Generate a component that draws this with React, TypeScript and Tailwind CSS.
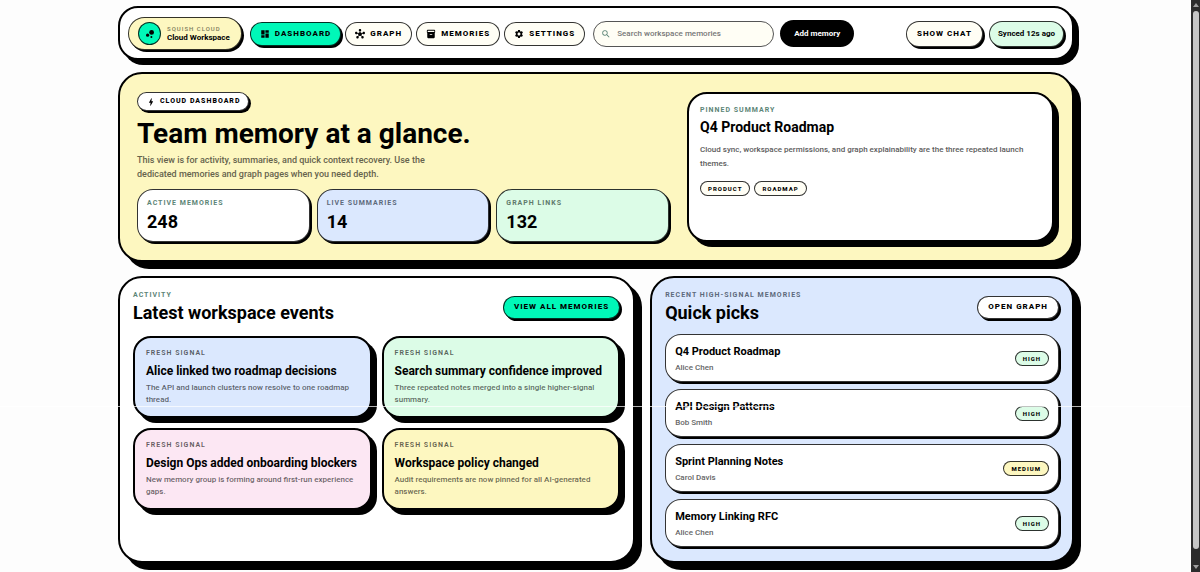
import type { ReactNode } from 'react';
import clsx from 'clsx';
import { MdBolt, MdBubbleChart, MdDashboard, MdHub, MdInventory2, MdSearch, MdSettings } from 'react-icons/md';

const navItems = [
  { label: 'Dashboard', icon: MdDashboard, active: true },
  { label: 'Graph', icon: MdHub, active: false },
  { label: 'Memories', icon: MdInventory2, active: false },
  { label: 'Settings', icon: MdSettings, active: false },
];

const stats = [
  { label: 'Active memories', value: '248', bg: 'bg-white', tone: 'text-[#5c8577]' },
  { label: 'Live summaries', value: '14', bg: 'bg-[#dbe8fe]', tone: 'text-[#5d6a7c]' },
  { label: 'Graph links', value: '132', bg: 'bg-[#dcfce7]', tone: 'text-[#5f7a6b]' },
];

const events = [
  { title: 'Alice linked two roadmap decisions', body: 'The API and launch clusters now resolve to one roadmap thread.', bg: 'bg-[#dbe8fe]' },
  { title: 'Search summary confidence improved', body: 'Three repeated notes merged into a single higher-signal summary.', bg: 'bg-[#dcfce7]' },
  { title: 'Design Ops added onboarding blockers', body: 'New memory group is forming around first-run experience gaps.', bg: 'bg-[#fce7f3]' },
  { title: 'Workspace policy changed', body: 'Audit requirements are now pinned for all AI-generated answers.', bg: 'bg-[#fdf7c0]' },
];

const picks = [
  { title: 'Q4 Product Roadmap', author: 'Alice Chen', level: 'High' },
  { title: 'API Design Patterns', author: 'Bob Smith', level: 'High' },
  { title: 'Sprint Planning Notes', author: 'Carol Davis', level: 'Medium' },
  { title: 'Memory Linking RFC', author: 'Alice Chen', level: 'High' },
];

function Eyebrow({ children, className }: { children: ReactNode; className?: string }) {
  return <p className={clsx('text-[7px] leading-2 font-bold tracking-[1px] uppercase', className)}>{children}</p>;
}

function Tag({ children, className }: { children: ReactNode; className?: string }) {
  return <span className={clsx('inline-flex h-[15px] items-center rounded-full border border-black/80 px-[7px] text-[6px] font-extrabold tracking-[1px] uppercase', className)}>{children}</span>;
}

function PillButton({ children, className }: { children: ReactNode; className?: string }) {
  return (
    <button className={clsx('shrink-0 rounded-full border border-black/80 px-[10px] text-[8px] font-extrabold tracking-[1px] whitespace-nowrap uppercase shadow-[2px_2px_0_#000]', className)}>
      {children}
    </button>
  );
}

function Scrollbar() {
  return (
    <div aria-hidden="true" className="fixed inset-y-0 right-0 flex w-[9px] flex-col items-center gap-1 bg-[#2c2c2c] py-[3px]">
      <span className="border-x-[3px] border-b-[4px] border-x-transparent border-b-[#9f9f9f]" />
      <span className="mb-3 w-[6px] flex-1 rounded-full bg-[#c6c6c6]" />
      <span className="border-x-[3px] border-t-[4px] border-x-transparent border-t-[#9f9f9f]" />
    </div>
  );
}

function Header() {
  return (
    <header className="flex items-center rounded-[20px] border-2 border-black bg-white px-2 pt-[9px] pb-2 shadow-[5px_5px_0_#000]">
      <a href="#" className="flex items-center gap-[6px] rounded-full border border-black/80 bg-[#fdf7c0] py-1 pr-[11px] pl-[9px] shadow-[2px_2px_0_#000]">
        <span className="flex size-[23px] items-center justify-center rounded-full border border-black/80 bg-[#00f8b8]"><MdBubbleChart className="size-3" /></span>
        <span className="whitespace-nowrap">
          <span className="block text-[6px] leading-2 font-medium tracking-[1px] text-[#7d7c5c] uppercase">Squish Cloud</span>
          <span className="block text-[8px] leading-[10px] font-bold">Cloud Workspace</span>
        </span>
      </a>
      <nav className="ml-2 flex gap-1">
        {navItems.map(({ label, icon: Icon, active }) => (
          <a key={label} href="#" className={clsx('flex h-6 items-center gap-[5px] rounded-full border border-black/80 px-[9px] text-[8px] font-extrabold tracking-[1px] uppercase', active ? 'bg-[#00f8b8] shadow-[2px_2px_0_#000]' : 'bg-[#fffef5]')}>
            <Icon className="size-[10px]" />{label}
          </a>
        ))}
      </nav>
      <label className="ml-2 flex h-[26px] w-[181px] items-center gap-[6px] rounded-full border border-[#555] bg-[#fffef5] px-[7px]">
        <MdSearch className="size-[10px] shrink-0 text-[#5c8577]" />
        <input type="search" aria-label="Search workspace memories" placeholder="Search workspace memories" className="w-full min-w-0 bg-transparent text-[8px] font-medium outline-none placeholder:text-[#777]" />
      </label>
      <button className="ml-[6px] h-[27px] rounded-full bg-black px-[14px] text-[8px] font-bold whitespace-nowrap text-white">Add memory</button>
      <div className="ml-auto flex gap-[6px]">
        <PillButton className="h-[26px] bg-[#fffef5]">Show chat</PillButton>
        <span className="flex h-[26px] items-center rounded-full border border-black/80 bg-[#dcfce7] px-2 text-[8px] font-bold whitespace-nowrap shadow-[2px_2px_0_#000]">Synced 12s ago</span>
      </div>
    </header>
  );
}

function Hero() {
  return (
    <section className="mt-3 grid grid-cols-[1.45fr_1fr] gap-[18px] rounded-[24px] border-2 border-black bg-[#fdf7c0] py-[18px] pr-[18px] pl-[17px] shadow-[7px_7px_0_#000]">
      <div>
        <span className="flex h-[19px] w-fit items-center gap-1 rounded-full border border-black/80 bg-white px-2 text-[7px] font-extrabold tracking-[1px] uppercase shadow-[2px_2px_0_#000]"><MdBolt className="size-[10px]" />Cloud dashboard</span>
        <h1 className="mt-[9px] text-[28px] leading-7 font-bold">Team memory at a glance.</h1>
        <p className="mt-[5px] max-w-[320px] text-[9px] leading-[14px] font-medium text-[#66634d]">This view is for activity, summaries, and quick context recovery. Use the dedicated memories and graph pages when you need depth.</p>
        <div className="mt-2 grid grid-cols-3 gap-[7px]">
          {stats.map(stat => (
            <div key={stat.label} className={clsx('rounded-[16px] border border-black/80 px-[9px] pt-[9px] pb-2 shadow-[2px_2px_0_#000]', stat.bg)}>
              <Eyebrow className={stat.tone}>{stat.label}</Eyebrow>
              <p className="mt-1 text-[18px] leading-[22px] font-bold">{stat.value}</p>
            </div>
          ))}
        </div>
      </div>
      <article className="rounded-[20px] border-2 border-black bg-white px-[11px] py-3 shadow-[5px_5px_0_#000]">
        <Eyebrow className="text-[#5c8577]">Pinned summary</Eyebrow>
        <h2 className="mt-[5px] text-[14px] leading-4 font-bold">Q4 Product Roadmap</h2>
        <p className="mt-2 text-[8px] leading-[14px] font-medium text-[#5c5c5c]">Cloud sync, workspace permissions, and graph explainability are the three repeated launch themes.</p>
        <div className="mt-[10px] flex gap-1">
          <Tag className="bg-[#fffef5]">Product</Tag>
          <Tag className="bg-[#fffef5]">Roadmap</Tag>
        </div>
      </article>
    </section>
  );
}

function Activity() {
  return (
    <section className="rounded-[24px] border-2 border-black bg-white p-[13px] shadow-[7px_7px_0_#000]">
      <div className="flex items-center justify-between">
        <div>
          <Eyebrow className="text-[#5c8577]">Activity</Eyebrow>
          <h2 className="mt-1 text-[18px] leading-5 font-bold">Latest workspace events</h2>
        </div>
        <PillButton className="h-[23px] bg-[#00f8b8]">View all memories</PillButton>
      </div>
      <div className="mt-[13px] grid grid-cols-2 gap-[10px]">
        {events.map(event => (
          <article key={event.title} className={clsx('rounded-[18px] border-2 border-black px-[11px] pt-[11px] pb-[10px] shadow-[5px_5px_0_#000]', event.bg)}>
            <Eyebrow className="text-black/60">Fresh signal</Eyebrow>
            <h3 className="mt-[7px] text-[12px] leading-[14px] font-bold whitespace-nowrap">{event.title}</h3>
            <p className="mt-1 text-[8px] leading-3 font-medium text-black/60">{event.body}</p>
          </article>
        ))}
      </div>
    </section>
  );
}

function QuickPicks() {
  return (
    <section className="rounded-[24px] border-2 border-black bg-[#dbe8fe] px-[13px] pt-[13px] pb-[14px] shadow-[7px_7px_0_#000]">
      <div className="flex items-center justify-between">
        <div>
          <Eyebrow className="text-[#5d6a7c]">Recent high-signal memories</Eyebrow>
          <h2 className="mt-1 text-[18px] leading-5 font-bold">Quick picks</h2>
        </div>
        <PillButton className="h-[23px] bg-white">Open graph</PillButton>
      </div>
      <ul className="mt-[11px] space-y-[7px]">
        {picks.map(pick => (
          <li key={pick.title} className="flex h-12 items-center justify-between rounded-[16px] border border-black/80 bg-white px-[9px] shadow-[2px_2px_0_#000]">
            <div className="pt-[2px]">
              <h3 className="text-[11px] leading-4 font-bold">{pick.title}</h3>
              <p className="mt-[2px] text-[8px] leading-3 font-medium text-[#666]">{pick.author}</p>
            </div>
            <Tag className={pick.level === 'High' ? 'bg-[#dcfce7]' : 'bg-[#fdf7c0]'}>{pick.level}</Tag>
          </li>
        ))}
      </ul>
    </section>
  );
}

export default function App() {
  return (
    <div className="min-h-screen bg-[#fdfdfd] pr-2 font-['Roboto','Liberation_Sans',sans-serif] text-black">
      <main className="mx-auto max-w-[956px] pt-[6px] pb-2">
        <Header />
        <Hero />
        <div className="mt-[14px] grid grid-cols-[1.22fr_1fr] gap-[15px]">
          <Activity />
          <QuickPicks />
        </div>
      </main>
      <div aria-hidden="true" className="pointer-events-none absolute inset-x-0 top-[406px] h-px bg-white/70" />
      <Scrollbar />
    </div>
  );
}
